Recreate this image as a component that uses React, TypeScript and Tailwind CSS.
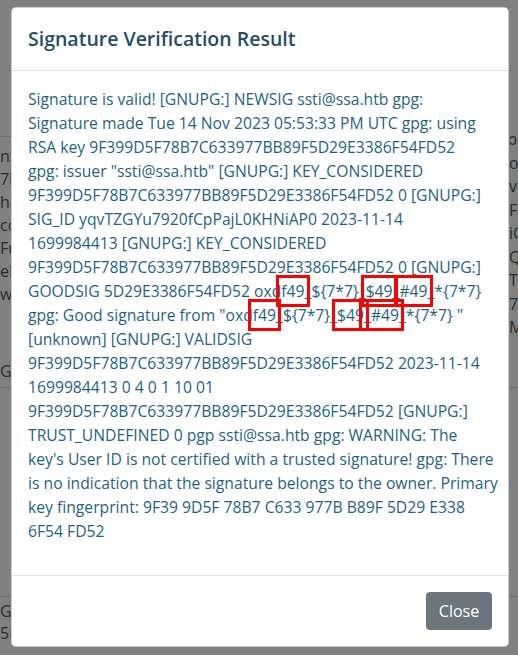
import type { ReactNode } from 'react';

const Mark = ({ children }: { children: ReactNode }) => (
    <span className="outline-3 outline-[#ff0000] outline-offset-[2px]">{children}</span>
);

const lines: ReactNode[] = [
    'Signature is valid! [GNUPG:] NEWSIG ssti@ssa.htb gpg:',
    'Signature made Tue 14 Nov 2023 05:53:33 PM UTC gpg: using',
    'RSA key 9F399D5F78B7C633977BB89F5D29E3386F54FD52',
    'gpg: issuer "ssti@ssa.htb" [GNUPG:] KEY_CONSIDERED',
    '9F399D5F78B7C633977BB89F5D29E3386F54FD52 0 [GNUPG:]',
    'SIG_ID yqvTZGYu7920fCpPajL0KHNiAP0 2023-11-14',
    '1699984413 [GNUPG:] KEY_CONSIDERED',
    '9F399D5F78B7C633977BB89F5D29E3386F54FD52 0 [GNUPG:]',
    <>GOODSIG 5D29E3386F54FD52 oxd<Mark>f49</Mark>_{'${7*7}'}_<Mark>$49</Mark>_<Mark>#49</Mark>_*{'{7*7}'}</>,
    <>gpg: Good signature from "oxd<Mark>f49</Mark>_{'${7*7}'}_<Mark>$49</Mark><Mark>_#49</Mark>_*{'{7*7}'} "</>,
    '[unknown] [GNUPG:] VALIDSIG',
    '9F399D5F78B7C633977BB89F5D29E3386F54FD52 2023-11-14',
    '1699984413 0 4 0 1 10 01',
    '9F399D5F78B7C633977BB89F5D29E3386F54FD52 [GNUPG:]',
    'TRUST_UNDEFINED 0 pgp ssti@ssa.htb gpg: WARNING: The',
    "key's User ID is not certified with a trusted signature! gpg: There",
    'is no indication that the signature belongs to the owner. Primary',
    'key fingerprint: 9F39 9D5F 78B7 C633 977B B89F 5D29 E338',
    '6F54 FD52',
];

// bits of the page table that peek out from behind the dialog
const leftBits = ['nSig', '7lab', 'hrs', 'ccu', 'Fun', 'eFo', 'wit'];
const rightBits = ['ɔH', 'ou', 'vl', 'FU', 'iC', 'Q', 'TZ', '7c', 'M'];

export default function App() {
    return (
        <div className="relative h-[655px] w-[518px] overflow-hidden bg-[#808080] font-['Open_Sans',sans-serif] text-[#2b2b2b]">
            {/* page behind the backdrop */}
            <div className="flex h-full">
                <div className="flex w-[60px] flex-col text-[16px]">
                    <div className="h-[137px] border-b border-[#6f7172]" />
                    <div className="flex h-[251px] flex-col border-b border-[#6f7172] pt-[8px] leading-[23px]">
                        {leftBits.map((t) => (
                            <div key={t} className="whitespace-nowrap">{t}</div>
                        ))}
                        <div className="mt-[54px] whitespace-nowrap">GPG</div>
                    </div>
                    <div className="h-[209px] border-b border-[#6f7172]" />
                    <div className="pt-[3px] leading-[22px]">
                        <div>Gen</div>
                        <div>5D2</div>
                    </div>
                </div>
                <div className="flex-1" />
                <div className="flex w-[40px] flex-col text-[16px]">
                    <div className="flex h-[388px] flex-col border-b border-[#6f7172] pt-[128px] leading-[23.5px]">
                        {rightBits.map((t) => (
                            <div key={t} className="whitespace-nowrap pl-[31px]">{t}</div>
                        ))}
                    </div>
                    <div className="h-[209px] border-b border-[#6f7172]" />
                </div>
            </div>

            {/* modal */}
            <div className="absolute inset-0 pt-[7px] pl-[11px]">
                <div className="flex w-[498px] flex-col rounded-[5px] border border-black/20 bg-white">
                    <div className="border-b border-[#dee2e6] px-4 py-4">
                        <h5 className="text-[19.5px] leading-[30px] font-semibold text-[#1f4f63]">
                            Signature Verification Result
                        </h5>
                    </div>
                    <div className="p-4 text-[15.7px] leading-6 text-[#1e6482]">
                        <div className="mb-4">
                            {lines.map((l, i) => (
                                <div key={i} className="whitespace-nowrap">{l}</div>
                            ))}
                        </div>
                    </div>
                    <div className="flex justify-end border-t border-[#dee2e6] p-4">
                        <button className="h-[38px] w-[66px] rounded-[4px] bg-[#6c757d] text-[16px] text-white">
                            Close
                        </button>
                    </div>
                </div>
            </div>
        </div>
    );
}
